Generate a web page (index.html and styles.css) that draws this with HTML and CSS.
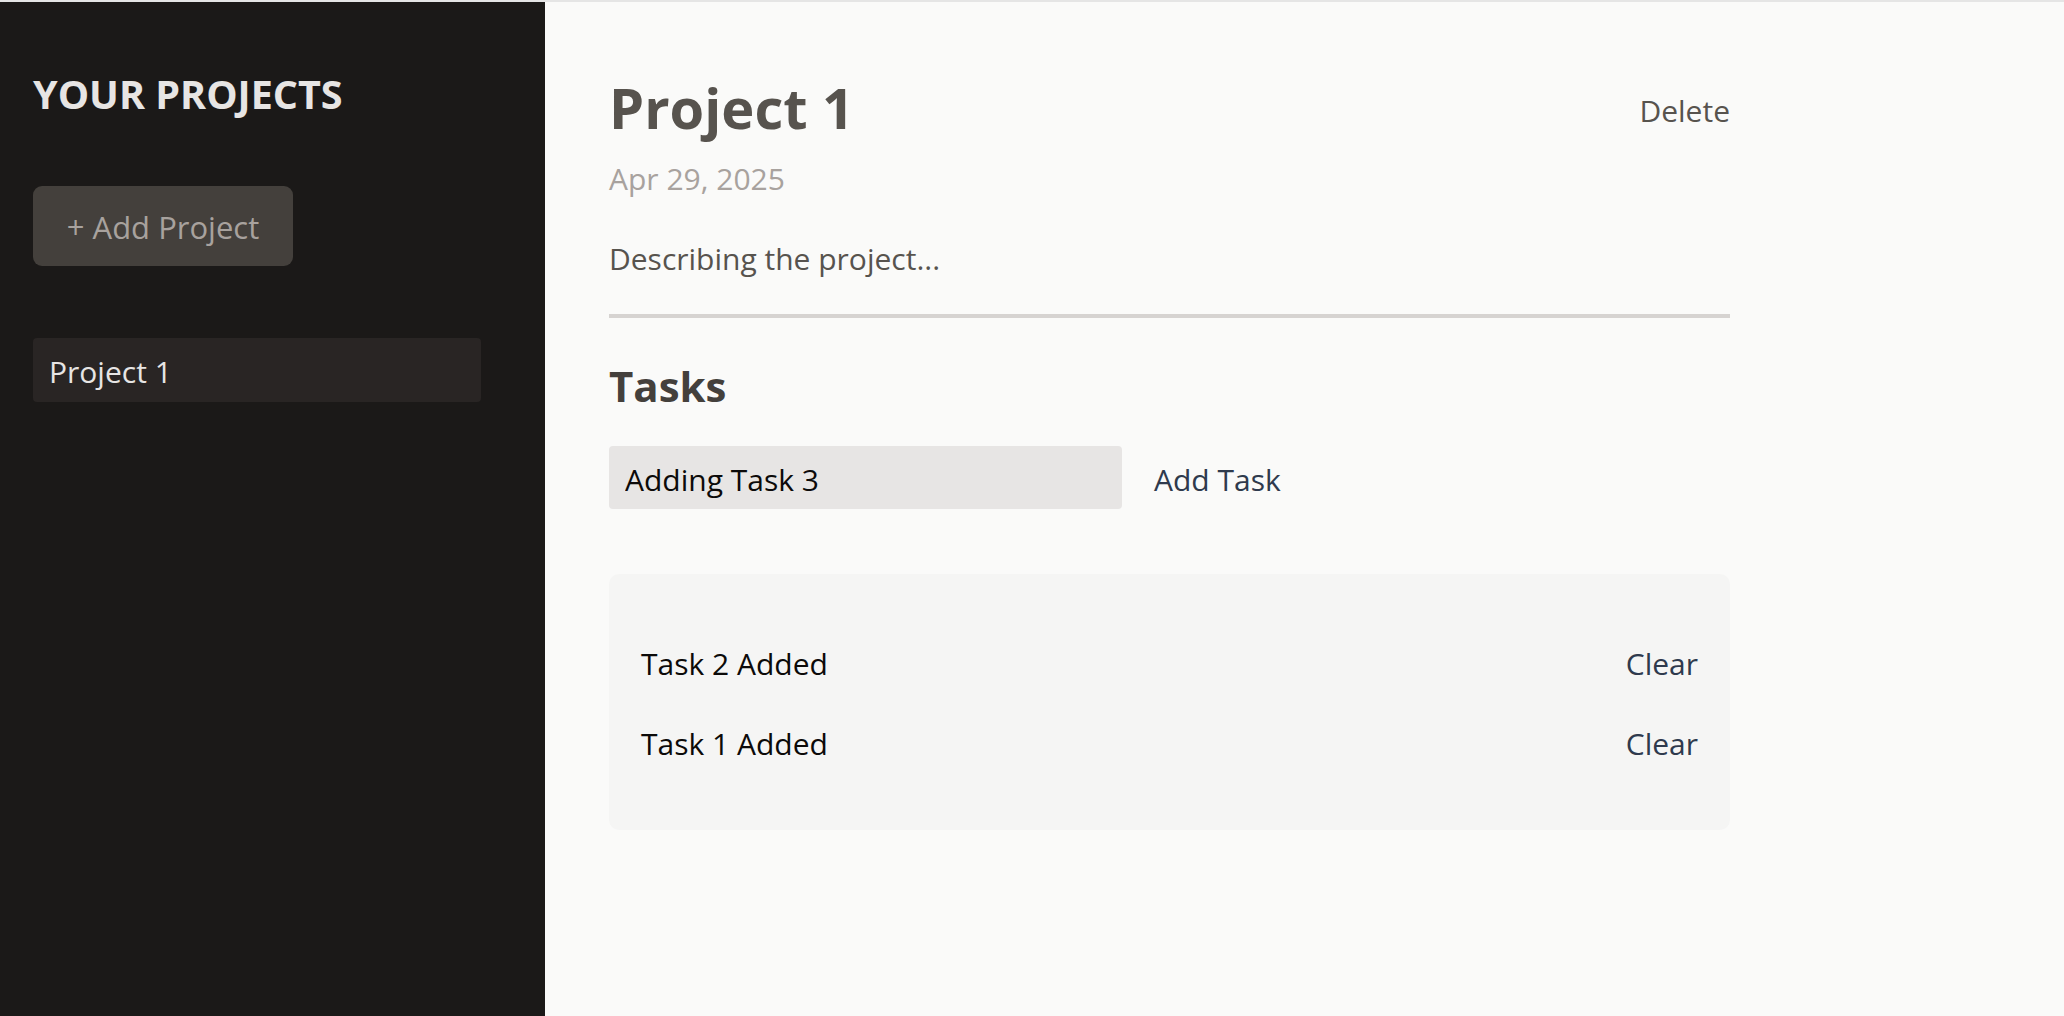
FILE: index.html
```html
<!DOCTYPE html>
<html lang="en">
<head>
<meta charset="utf-8">
<title>Projects</title>
<link rel="stylesheet" href="styles.css">
</head>
<body>
<div class="app">
  <aside class="sidebar">
    <h2 class="sidebar-title">YOUR PROJECTS</h2>
    <button class="add-project">+ Add Project</button>
    <ul class="project-list">
      <li><button class="project-item">Project 1</button></li>
    </ul>
  </aside>
  <main class="main">
    <div class="project">
      <header class="project-header">
        <div class="project-head-text">
          <h1 class="project-title">Project 1</h1>
          <p class="project-date">Apr 29, 2025</p>
          <p class="project-desc">Describing the project...</p>
        </div>
        <button class="link-btn delete-btn">Delete</button>
      </header>
      <section class="tasks">
        <h2 class="tasks-title">Tasks</h2>
        <div class="new-task">
          <input class="task-input" type="text" value="Adding Task 3">
          <button class="link-btn add-task">Add Task</button>
        </div>
        <ul class="task-list">
          <li class="task-row"><span>Task 2 Added</span><button class="link-btn clear-btn">Clear</button></li>
          <li class="task-row"><span>Task 1 Added</span><button class="link-btn clear-btn">Clear</button></li>
        </ul>
      </section>
    </div>
  </main>
</div>
</body>
</html>
```
FILE: styles.css
```css
* { box-sizing: border-box; }
html, body { margin: 0; padding: 0; }
body {
  background: #e5e5e5;
  padding-top: 2px;
  font-family: "Open Sans", "Noto Sans", sans-serif;
  height: 100vh;
  overflow: hidden;
}
.app {
  display: flex;
  height: calc(100vh - 2px);
}
button { font-family: inherit; cursor: pointer; }

/* Sidebar */
.sidebar {
  width: 545px;
  flex: none;
  background: #1b1918;
  padding: 72px 64px 0 33px;
}
.sidebar-title {
  margin: 0;
  font-size: 39.5px;
  line-height: 40px;
  font-weight: 700;
  color: #e7e5e4;
}
.add-project {
  display: block;
  margin-top: 72px;
  width: 260px;
  height: 80px;
  padding: 2px 0 0;
  border: none;
  border-radius: 9px;
  background: #44403c;
  color: #a8a29e;
  font-size: 31px;
  line-height: 78px;
  text-align: center;
}
.project-list {
  list-style: none;
  margin: 72px 0 0;
  padding: 0;
}
.project-item {
  display: block;
  width: 448px;
  height: 64px;
  padding: 3px 16px 0;
  border: none;
  border-radius: 4px;
  background: #292524;
  color: #e7e5e4;
  font-size: 30px;
  line-height: 61px;
  text-align: left;
}

/* Main */
.main {
  flex: 1;
  background: #fafaf9;
  padding: 72px 0 0 64px;
}
.project {
  width: 1121px;
}
.project-header {
  display: flex;
  justify-content: space-between;
  align-items: flex-start;
  padding-bottom: 35px;
  border-bottom: 4px solid #d6d3d1;
}
.project-title {
  margin: 0;
  font-size: 56px;
  line-height: 66px;
  font-weight: 700;
  color: #57534e;
}
.project-date {
  margin: 19px 0 0;
  font-size: 30px;
  line-height: 40px;
  color: #a8a29e;
}
.project-desc {
  margin: 40px 0 0;
  font-size: 30px;
  line-height: 40px;
  color: #57534e;
}
.link-btn {
  background: none;
  border: none;
  padding: 0;
  font-size: 30px;
  line-height: 40px;
}
.delete-btn {
  margin-top: 17px;
  color: #57534e;
}

.tasks-title {
  margin: 43px 0 0;
  font-size: 42px;
  line-height: 50px;
  font-weight: 700;
  color: #44403c;
}
.new-task {
  display: flex;
  align-items: stretch;
  margin-top: 35px;
  height: 63px;
}
.task-input {
  width: 513px;
  height: 63px;
  padding: 4px 16px 0;
  border: none;
  border-radius: 4px;
  background: #e7e5e4;
  color: #0c0a09;
  font-family: inherit;
  font-size: 30px;
  outline: none;
}
.add-task {
  margin-left: 32px;
  padding-top: 4px;
  line-height: 59px;
  color: #2f3a4d;
}
.task-list {
  list-style: none;
  margin: 65px 0 0;
  padding: 70px 32px 66px;
  background: #f5f5f4;
  border-radius: 10px;
  display: flex;
  flex-direction: column;
  gap: 40px;
}
.task-row {
  display: flex;
  justify-content: space-between;
  align-items: center;
  font-size: 30px;
  line-height: 40px;
  color: #0c0a09;
}
.clear-btn {
  color: #2f3a4d;
}
```
